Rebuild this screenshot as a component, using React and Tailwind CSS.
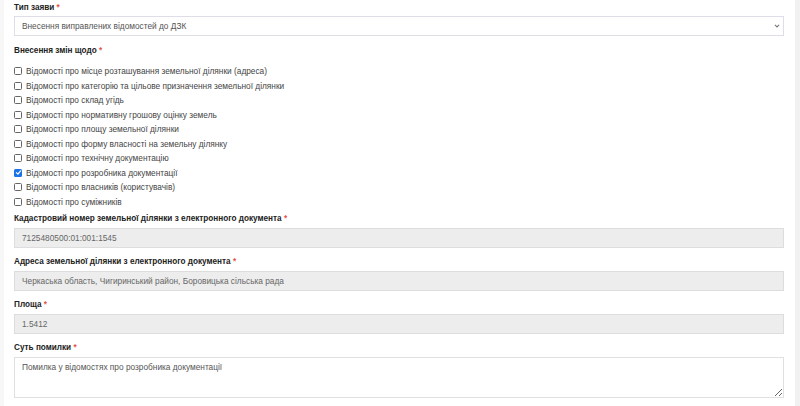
const options = [
  { label: 'Відомості про місце розташування земельної ділянки (адреса)', checked: false },
  { label: 'Відомості про категорію та цільове призначення земельної ділянки', checked: false },
  { label: 'Відомості про склад угідь', checked: false },
  { label: 'Відомості про нормативну грошову оцінку земель', checked: false },
  { label: 'Відомості про площу земельної ділянки', checked: false },
  { label: 'Відомості про форму власності на земельну ділянку', checked: false },
  { label: 'Відомості про технічну документацію', checked: false },
  { label: 'Відомості про розробника документації', checked: true },
  { label: 'Відомості про власників (користувачів)', checked: false },
  { label: 'Відомості про суміжників', checked: false },
];

function Label({ children, className = '' }) {
  return (
    <div className={`h-[10px] text-[8.2px] leading-[10px] font-bold text-[#222] ${className}`}>
      {children} <span className="text-[#e5534b]">*</span>
    </div>
  );
}

function ReadOnlyInput({ value }) {
  return (
    <div className="mt-[4px] flex h-[20px] items-center border border-[#dddddd] bg-[#ededed] pl-[7px] text-[8.3px] text-[#666]">
      {value}
    </div>
  );
}

function Checkbox({ checked }) {
  if (checked) {
    return (
      <span className="flex h-[8px] w-[8px] items-center justify-center rounded-[1.5px] bg-[#1a73e8]">
        <svg viewBox="0 0 10 10" className="h-[7px] w-[7px]" fill="none" stroke="white" strokeWidth="1.8" strokeLinecap="round" strokeLinejoin="round">
          <path d="M2 5.2 L4.2 7.3 L8 2.8" />
        </svg>
      </span>
    );
  }
  return <span className="h-[8px] w-[8px] rounded-[1.5px] border border-[#666] bg-white" />;
}

export default function App() {
  return (
    <div className="flex h-[406px] w-[800px] overflow-hidden bg-white font-['Liberation_Sans',Arial,sans-serif]">
      <div className="w-[4px] shrink-0 bg-[#f7f7f7]" />
      <div className="flex-1 pl-[10px] pr-[11px] pt-[3px]">
        <Label>Тип заяви</Label>
        <div className="mt-[3px] flex h-[20px] items-center justify-between border border-[#dedde8] bg-white pl-[7px] pr-[3px] text-[8.3px] text-[#555]">
          <span>Внесення виправлених відомостей до ДЗК</span>
          <svg viewBox="0 0 10 10" className="h-[6px] w-[6px]" fill="none" stroke="#777" strokeWidth="1.8" strokeLinecap="round">
            <path d="M2 3.5 L5 6.5 L8 3.5" />
          </svg>
        </div>

        <Label className="mt-[10px]">Внесення змін щодо</Label>
        <div className="mt-[8px]">
          {options.map((o) => (
            <div key={o.label} className="flex h-[14.5px] items-center gap-[4px] text-[8.3px] text-[#444]">
              <Checkbox checked={o.checked} />
              <span>{o.label}</span>
            </div>
          ))}
        </div>

        <Label className="mt-[5px]">Кадастровий номер земельної ділянки з електронного документа</Label>
        <ReadOnlyInput value="7125480500:01:001:1545" />

        <Label className="mt-[9px]">Адреса земельної ділянки з електронного документа</Label>
        <ReadOnlyInput value="Черкаська область, Чигиринський район, Боровицька сільська рада" />

        <Label className="mt-[9px]">Площа</Label>
        <ReadOnlyInput value="1.5412" />

        <Label className="mt-[9px]">Суть помилки</Label>
        <textarea
          readOnly
          defaultValue="Помилка у відомостях про розробника документації"
          className="mt-[4px] block h-[41px] w-full resize-y border border-[#e0e0e0] bg-white px-[7px] py-[4px] text-[8.3px] leading-[11px] text-[#555] outline-none"
        />
      </div>
      <div className="w-[5px] shrink-0 bg-[#f1f1f1]" />
    </div>
  );
}
